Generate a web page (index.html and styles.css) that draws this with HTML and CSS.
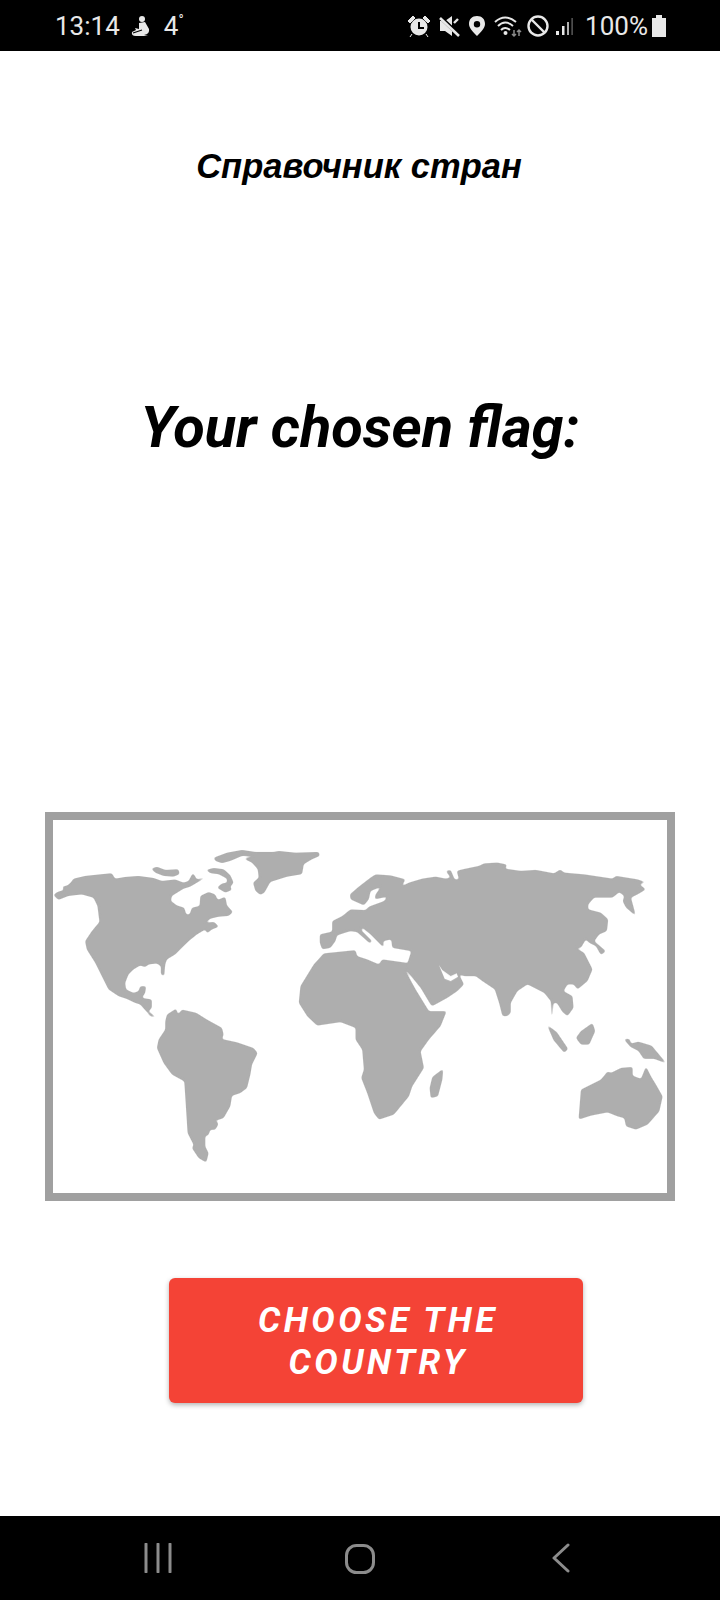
FILE: index.html
```html
<!DOCTYPE html>
<html lang="ru">
<head>
    <meta charset="UTF-8">
    <title>Справочник стран</title>
    <link rel="stylesheet" href="styles.css">
</head>
<body>

    <div class="status-bar">
        <div class="status-left">
            <span class="status-time">13:14</span>
            <svg class="icon-weather" viewBox="0 0 20 22" width="20" height="22">
                <circle cx="11" cy="4" r="3" fill="#e8e8e8"/>
                <path d="M8 8 L14 7 L18 14 Q19 19 13 20 L17 21 L5 21 Q0 21 1 17 L5 15 L4 13 L8 14 Z" fill="#e8e8e8"/>
                <path d="M2 18 L11 15" stroke="#000" stroke-width="1.2"/>
            </svg>
            <span class="status-temp">4<sup>°</sup></span>
        </div>
        <div class="status-right">
            <svg class="icon-alarm" viewBox="0 0 24 24" width="24" height="24">
                <circle cx="12" cy="13" r="8.5" fill="#e8e8e8"/>
                <path d="M12 8 V14 H17" stroke="#000" stroke-width="2" fill="none"/>
                <path d="M1 7 L6 2 L8 4 L3 9 Z M23 7 L18 2 L16 4 L21 9 Z M5 20 L3 23 M19 20 L21 23" fill="#e8e8e8" stroke="#e8e8e8" stroke-width="1"/>
            </svg>
            <svg class="icon-mute" viewBox="0 0 22 22" width="22" height="22">
                <path d="M2 6 H7 L14 1 V21 L7 16 H2 Z" fill="#e8e8e8"/>
                <path d="M1 1 L20 19" stroke="#000" stroke-width="4"/>
                <path d="M2 3 L21 21" stroke="#e8e8e8" stroke-width="2.6"/>
                <path d="M16 8 L20 4" stroke="#e8e8e8" stroke-width="2.4"/>
            </svg>
            <svg class="icon-pin" viewBox="0 0 20 22" width="20" height="22">
                <path fill-rule="evenodd" d="M10 1 C15 1 18 4 18 9 C18 13 14 17 10 21 C6 17 2 13 2 9 C2 4 5 1 10 1 Z M10 6 A3.2 3.2 0 1 0 10 12.4 A3.2 3.2 0 1 0 10 6 Z" fill="#e8e8e8"/>
            </svg>
            <svg class="icon-wifi" viewBox="0 0 28 24" width="28" height="24">
                <path d="M1 8 Q11 -1 22 8 M4 12 Q11 5 19 12 M7 16 Q11 12 16 16" stroke="#e8e8e8" stroke-width="2" fill="none"/>
                <circle cx="11.5" cy="19" r="2" fill="#e8e8e8"/>
                <path d="M20 16 V22 M18 20 L20 22 L22 20" stroke="#8a8a8a" stroke-width="1.5" fill="none"/>
                <path d="M25 22 V16 M23 18 L25 16 L27 18" stroke="#8a8a8a" stroke-width="1.5" fill="none"/>
            </svg>
            <svg class="icon-block" viewBox="0 0 24 24" width="24" height="24">
                <circle cx="12" cy="12" r="9.5" stroke="#e8e8e8" stroke-width="2.4" fill="none"/>
                <path d="M5.5 5.5 L18.5 18.5" stroke="#e8e8e8" stroke-width="2.4"/>
            </svg>
            <svg class="icon-signal" viewBox="0 0 20 22" width="20" height="22">
                <rect x="2" y="16" width="3" height="4" fill="#e8e8e8"/>
                <rect x="8" y="11" width="2.5" height="9" fill="#e8e8e8"/>
                <rect x="13" y="7" width="2" height="13" fill="#b0b0b0"/>
                <rect x="17.5" y="3" width="1.2" height="17" fill="#6e6e6e"/>
            </svg>
            <span class="status-battery">100%</span>
            <svg class="icon-battery" viewBox="0 0 16 22" width="16" height="22">
                <path d="M5 0 H11 V3 H15 V22 H1 V3 H5 Z" fill="#e8e8e8"/>
            </svg>
        </div>
    </div>

    <main class="tela">
        <h2 class="titulo">Справочник стран</h2>
        <h1 class="chosen">Your chosen flag:</h1>

        <div class="mapa">
            <svg viewBox="39 63 1839 1116" width="614" height="373">
                <defs>
                    <!-- arredonda os cantos dos poligonos -->
                    <filter id="suave" x="0" y="0" width="100%" height="100%">
                        <feGaussianBlur stdDeviation="2.5"/>
                        <feComponentTransfer>
                            <feFuncA type="linear" slope="3" intercept="-1"/>
                        </feComponentTransfer>
                    </filter>
                </defs>
                <g fill="#aeaeae" filter="url(#suave)">
                    <!-- America do norte -->
                    <path d="M40 287 L52 278 L72 272 L66 262 L82 258 L92 250 L100 238 L135 230 L170 226 L215 222 L225 238 L255 233 L295 230 L340 236 L365 245 L405 240 L430 250 L445 245 L458 220 L470 240 L500 232 L470 250 L450 262 L430 268 L395 290 L392 305 L410 318 L432 325 L438 345 L448 345 L455 325 L478 320 L480 290 L505 278 L525 285 L532 302 L555 292 L560 318 L578 338 L565 350 L535 352 L510 358 L495 370 L522 368 L536 382 L515 390 L500 402 L495 390 L470 405 L445 425 L425 445 L405 465 L380 480 L375 495 L372 530 L362 525 L362 500 L350 492 L325 495 L315 503 L300 498 L280 510 L265 525 L255 550 L258 570 L280 580 L295 575 L300 560 L318 560 L315 580 L305 595 L335 600 L335 625 L325 635 L350 655 L330 650 L318 635 L300 615 L285 610 L260 598 L235 590 L205 570 L190 540 L165 490 L140 450 L135 425 L155 395 L178 368 L172 320 L160 295 L125 285 L85 290 L55 302 Z"/>
                    <path d="M497 212 L520 206 L550 210 L570 228 L580 250 L570 262 L575 272 L555 280 L530 265 L545 252 L560 250 L560 238 L535 225 L510 222 Z"/>
                    <path d="M333 208 L350 202 L375 212 L415 210 L418 225 L400 232 L370 230 L345 220 Z"/>
                    <path d="M520 175 L560 160 L605 152 L645 158 L700 158 L715 155 L765 160 L835 158 L838 170 L815 180 L790 195 L785 225 L740 232 L690 248 L672 280 L660 287 L645 275 L638 250 L655 235 L652 210 L635 190 L610 178 L645 170 L605 170 L570 185 L545 192 L525 185 Z"/>
                    <!-- America do sul -->
                    <g transform="translate(0 570)">
                        <path d="M375 95 L380 75 L408 57 L413 75 L425 60 L468 70 L500 90 L545 115 L550 135 L545 148 L590 158 L640 175 L652 190 L635 225 L630 255 L620 295 L600 310 L575 318 L570 350 L550 385 L530 392 L520 385 L535 402 L525 420 L510 420 L505 435 L495 440 L495 470 L505 490 L498 518 L475 505 L455 475 L460 465 L442 430 L435 320 L432 275 L395 255 L370 220 L350 175 L355 150 L375 120 Z"/>
                    </g>
                    <g transform="translate(930 0)">
                        <!-- Eurasia -->
                        <path d="M-2 285 L25 262 L60 235 L75 225 L120 228 L165 240 L152 262 L175 250 L215 238 L255 232 L285 238 L300 235 L285 215 L300 212 L312 240 L325 240 L318 215 L335 210 L385 200 L400 192 L440 190 L470 196 L462 208 L510 215 L555 212 L610 222 L628 210 L640 220 L700 225 L785 238 L795 230 L860 240 L910 258 L880 250 L865 255 L885 270 L860 285 L840 295 L855 350 L825 325 L815 305 L820 290 L805 278 L785 295 L730 295 L712 315 L712 330 L750 340 L772 360 L768 395 L745 405 L730 425 L765 455 L750 467 L735 440 L715 430 L705 420 L690 445 L675 445 L700 460 L725 510 L710 545 L680 570 L668 555 L650 555 L638 575 L665 590 L668 625 L650 650 L635 638 L618 610 L608 610 L605 648 L601 650 L600 605 L580 580 L530 555 L500 575 L480 610 L480 640 L470 650 L455 650 L445 610 L432 570 L395 545 L375 530 L340 530 L325 525 L340 555 L320 575 L290 595 L245 620 L240 615 L210 565 L165 510 L182 455 L125 445 L122 420 L98 425 L100 445 L60 405 L35 385 L32 392 L65 425 L58 432 L35 412 L20 398 L0 395 L-15 400 L-40 408 L-45 425 L-60 445 L-85 450 L-92 430 L-92 405 L-55 397 L-55 372 L-55 365 L-25 350 L0 330 L45 332 L55 322 L100 305 L112 292 L72 300 L75 285 L92 262 L60 275 L55 300 L40 318 L0 300 Z"/>
                        <!-- Africa -->
                        <path d="M-80 462 L15 452 L20 470 L50 480 L85 495 L95 480 L170 490 L165 515 L195 570 L235 635 L288 635 L270 680 L235 720 L210 755 L220 805 L185 860 L175 890 L130 945 L85 960 L70 940 L50 880 L32 835 L40 810 L35 750 L15 720 L15 685 L-30 668 L-100 678 L-130 650 L-155 610 L-150 560 L-110 495 Z"/>
                        <g transform="translate(0 570)">
                            <!-- Ilhas e Australia -->
                            <path d="M278 237 L275 270 L262 320 L240 325 L237 295 L245 262 Z"/>
                            <path d="M588 105 L618 128 L652 178 L640 190 L608 152 Z"/>
                            <path d="M725 100 L733 125 L715 165 L690 165 L675 145 L690 125 Z"/>
                            <path d="M818 148 L836 148 L840 162 L862 156 L902 168 L927 198 L947 222 L910 208 L878 208 L862 184 L838 172 Z"/>
                            <path d="M683 390 L690 300 L750 270 L770 245 L780 250 L810 235 L845 232 L845 258 L870 268 L885 230 L900 260 L915 285 L935 320 L925 365 L890 405 L855 420 L825 410 L820 385 L800 380 L770 368 L720 378 Z"/>
                        </g>
                    </g>
                </g>
                <!-- mares estreitos -->
                <g transform="translate(930 0)" fill="#fff">
                    <path d="M265 497 L275 512 L300 530 L318 522 L322 532 L300 545 L282 538 Z"/>
                </g>
                <path d="M155 485 L160 490 L172 540 L163 520 Z" fill="#fff"/>
            </svg>
        </div>

        <button class="btn-escolher">CHOOSE THE COUNTRY</button>
    </main>

    <div class="nav-bar">
        <svg class="nav-recentes" viewBox="0 0 28 30" width="28" height="30">
            <path d="M2 1 V29 M14 1 V29 M26 1 V29" stroke="#8c8c8c" stroke-width="3" stroke-linecap="round"/>
        </svg>
        <svg class="nav-home" viewBox="0 0 32 32" width="32" height="32">
            <rect x="2.5" y="2.5" width="27" height="27" rx="10" stroke="#8c8c8c" stroke-width="3" fill="none"/>
        </svg>
        <svg class="nav-voltar" viewBox="0 0 18 30" width="18" height="30">
            <path d="M16 2 L2 15 L16 28" stroke="#8c8c8c" stroke-width="3" fill="none" stroke-linecap="round" stroke-linejoin="round"/>
        </svg>
    </div>

</body>
</html>
```

FILE: styles.css
```css
body {
    font-family: Roboto, "Liberation Sans", sans-serif;
    margin: 0;
    width: 720px;
    height: 1600px;
    display: flex;
    flex-direction: column;
    background: #fff;
}
.status-bar {
    height: 51px;
    background: #000;
    color: #e8e8e8;
    display: flex;
    justify-content: space-between;
    align-items: center;
    padding: 0 53px 0 55px;
    font-size: 26px;
}
.status-left, .status-right {
    display: flex;
    align-items: center;
}
.icon-weather {
    margin-left: 11px;
}
.status-temp {
    margin-left: 13px;
}
.status-temp sup {
    font-size: 14px;
    line-height: 0;
}
.icon-alarm, .icon-mute, .icon-pin {
    margin-right: 7px;
}
.icon-wifi, .icon-block {
    margin-right: 4px;
}
.status-battery {
    margin-left: 11px;
    margin-right: 3px;
}
.tela {
    flex: 1;
    display: flex;
    flex-direction: column;
    align-items: center;
}
.titulo {
    margin: 95px 2px 0 0;
    font-family: "Liberation Sans", Arial, sans-serif;
    font-size: 34.5px;
    line-height: 40px;
    font-weight: 700;
    font-style: italic;
    color: #000;
}
.chosen {
    margin: 209px 0 0;
    font-size: 57.7px;
    line-height: 64px;
    font-weight: 700;
    font-style: italic;
    color: #000;
}
.mapa {
    margin-top: 353px;
    width: 614px;
    height: 373px;
    border: 8px solid #a0a0a0;
    background: #fff;
}
.mapa svg {
    display: block;
}
.btn-escolher {
    margin: 77px 0 0 32px;
    width: 414px;
    height: 125px;
    padding: 3px 58px 0 62px;
    border: 0;
    border-radius: 6px;
    background: #f44336;
    color: #fff;
    font-family: Roboto, "Liberation Sans", sans-serif;
    font-size: 35px;
    line-height: 42px;
    font-weight: 700;
    font-style: italic;
    letter-spacing: 3.5px;
    box-shadow: 0 2px 5px rgba(0, 0, 0, 0.3);
}
.nav-bar {
    box-sizing: border-box;
    height: 84px;
    background: #000;
    display: flex;
    justify-content: space-between;
    align-items: flex-start;
    padding: 27px 150px 0 144px;
}
.nav-home {
    margin-right: 4px;
}
```
